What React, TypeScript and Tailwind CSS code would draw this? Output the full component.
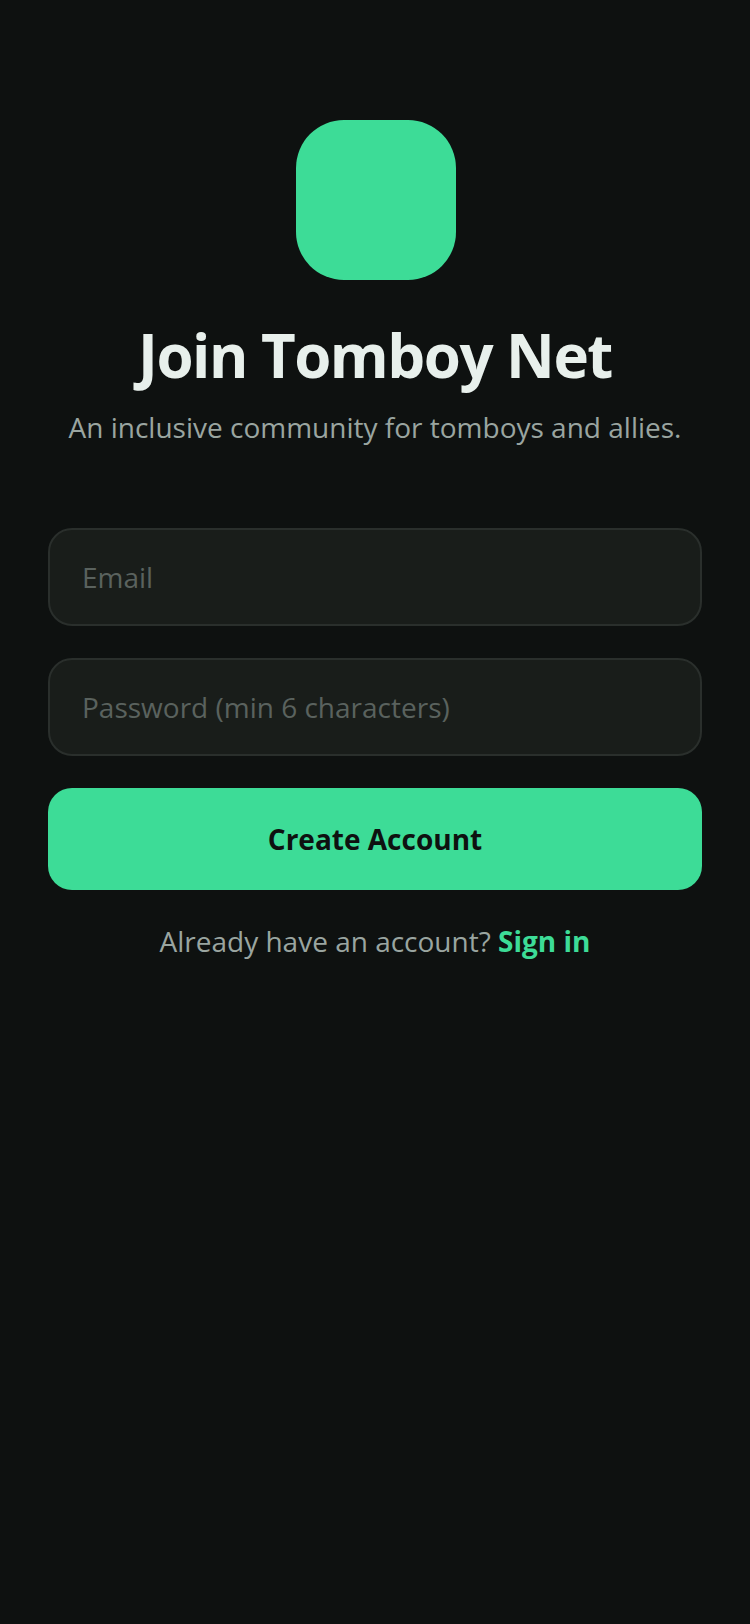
export default function App() {
  return (
    <div className="min-h-[1624px] bg-[#0e1110] font-['Open_Sans',sans-serif] px-12 pt-[120px]">
      <div className="flex flex-col items-center">
        {/* Logo tile */}
        <div className="ml-[1px] w-40 h-40 rounded-[48px] bg-[#3ddc97]" />
        <h1 className="mt-[39px] text-[60px] leading-[72px] font-bold text-[#e8f0ec] tracking-[-1.5px]">Join Tomboy Net</h1>
        <p className="mt-[16px] text-[28px] leading-[40px] text-[#9aa5a0]">An inclusive community for tomboys and allies.</p>
      </div>

      <div className="mt-[81px] flex flex-col gap-8">
        <input
          placeholder="Email"
          className="h-[98px] w-full rounded-[24px] border-2 border-[#2a2f2c] bg-[#191d1a] px-8 text-[28px] text-white outline-none placeholder:text-[#5a625e]"
        />
        <input
          placeholder="Password (min 6 characters)"
          className="h-[98px] w-full rounded-[24px] border-2 border-[#2a2f2c] bg-[#191d1a] px-8 text-[28px] text-white outline-none placeholder:text-[#5a625e]"
        />
        <button className="h-[102px] w-full rounded-[24px] bg-[#3ddc97] text-[28px] font-bold text-[#0e1110]">Create Account</button>
      </div>

      <p className="mt-[31px] text-center text-[28px] leading-[40px] text-[#9aa5a0]">
        Already have an account? <span className="font-bold text-[#3ddc97]">Sign in</span>
      </p>
    </div>
  );
}
